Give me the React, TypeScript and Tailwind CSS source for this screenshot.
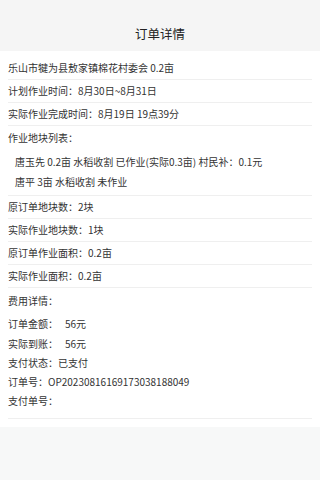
import React from "react";

const font = { fontFamily: '"Noto Sans CJK SC", "Noto Sans", sans-serif' };

const Row: React.FC<{ children: React.ReactNode }> = ({ children }) => (
  <div className="h-[23px] flex items-center border-b border-[#efefef] whitespace-nowrap">
    {children}
  </div>
);

export default function App() {
  return (
    <div className="w-full min-h-screen bg-[#f7f8f8] text-[#333] text-[10px] leading-[14px]" style={font}>
      <div className="h-[51px] bg-[#f5f5f5] flex items-center justify-center pt-[17px]">
        <span className="text-[12.5px] text-[#222]">订单详情</span>
      </div>

      <div className="bg-white px-[8px] pt-[6px] pb-[8px]">
        <Row>乐山市犍为县敖家镇棉花村委会 0.2亩</Row>
        <Row>计划作业时间：8月30日~8月31日</Row>
        <Row>实际作业完成时间：8月19日 19点39分</Row>

        <div className="border-b border-[#efefef] pt-[5px] pb-[3px] whitespace-nowrap">
          <div className="h-[14px] flex items-center">作业地块列表：</div>
          <div className="pl-[7px] pt-[7px]">
            <div className="h-[20px] flex items-center">唐玉先 0.2亩 水稻收割 已作业(实际0.3亩) 村民补：0.1元</div>
            <div className="h-[20px] flex items-center">唐平 3亩 水稻收割 未作业</div>
          </div>
        </div>

        <Row>原订单地块数：2块</Row>
        <Row>实际作业地块数：1块</Row>
        <Row>原订单作业面积：0.2亩</Row>
        <Row>实际作业面积：0.2亩</Row>

        <div className="border-b border-[#efefef] pt-[5px] pb-[7px] whitespace-nowrap">
          <div className="h-[16px] flex items-center">费用详情：</div>
          <div className="h-[20px] mt-[5px] flex items-center">
            订单金额：<span className="ml-[7px]">56元</span>
          </div>
          <div className="h-[19px] flex items-center">
            实际到账：<span className="ml-[7px]">56元</span>
          </div>
          <div className="h-[19px] flex items-center">支付状态：已支付</div>
          <div className="h-[19px] flex items-center">订单号：OP20230816169173038188049</div>
          <div className="h-[20px] flex items-center">支付单号：</div>
        </div>
      </div>
    </div>
  );
}
